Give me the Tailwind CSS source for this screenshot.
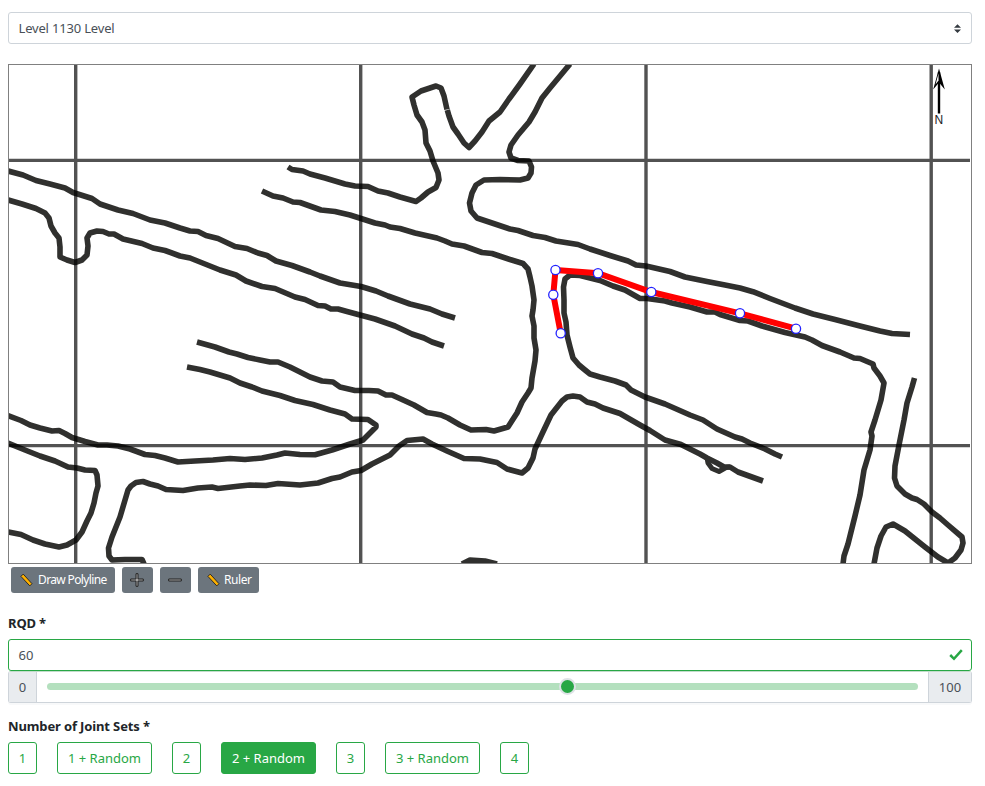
<!DOCTYPE html>
<html lang="en">
<head>
<meta charset="utf-8">
<title>Level map</title>
<script src="https://cdn.jsdelivr.net/npm/@tailwindcss/browser@4"></script>
</head>
<body class="bg-white px-2 pt-3 font-['Noto_Sans',sans-serif] text-[13px] text-[#495057] w-[980px] overflow-hidden">
<div class="flex h-8 items-center justify-between rounded-[3px] border border-[#ced4da] pl-[9.5px] pr-[10px]">
  <span class="pt-[2px] tracking-[-0.18px]">Level 1130 Level</span>
  <svg class="h-[9px] w-[7px]" viewBox="0 0 4 5"><path fill="#343a40" d="M2 0L0 2h4zm0 5L0 3h4z"/></svg>
</div>

<div class="mt-5 h-[500px] border border-[#808080]">
<svg class="block h-[498px] w-[962px]" viewBox="9 65 962 498">
  <!-- mine workings -->
  <g fill="none" stroke="#30302e" stroke-width="5.6" stroke-linejoin="round">
    <polyline points="8,171 23,175 36,180.5 50,184 65,188 73,192.5 92,198.5 100,204 118,210 133,213.5 150,220 165,223 180,228 190,231 198,231.5 206,235.5 218,238.5 235,246.5 247,248.5 258,253 267,255.5 276,261 292,265.5 310,272 320,276 340,283 361,286.5 376,291 388,296 410,304 430,309 442,314 455,318"/>
    <polyline points="8,200 22,204 36,208.5 45,213 49,218 51,226 55,233 59,238 60,247 60,257 67,260 75,262.5 82,260 87,255 88,246 87,238 90,233 97,231 103,231.5 109,234 114,234 123,239 142,243.5 153,248 165,250.5 180,256 190,258 220,270 236,275 246,281 262,286.5 275,288.5 295,297 305,299.5 318,305.5 325,306 331,309 338,309 347,311.5 360,315 375,319 395,326 412,334 424,338 432,342 444,346"/>
    <polyline points="288,167 292,169.5 303,171 310,174 325,178 345,184 355,186 368,186.5 378,191 388,193 400,197 416,201.5 421,198 428,192 436,187.5 439,180 438,173 433,161 430,151 426,143 425,130 422,122 417,115 414,105 412,97 421,91 436,86 441,88 444,96 447,109.500"/>
    <polyline points="447.300,110 449,116 453,127 458,134 464,143 469,147.5 475,141 482,132 489,121 500,112 509,99 520,84 534,64"/>
    <polyline points="262,191 273,196 283,198 293,202 300,202.5 321,210 335,211.5 350,215 361,218.5 375,223 385,225 390,227 400,228.5 415,233 437,238 445,241 452,244 464,246 482,252.5 492,253.5 510,259.5 523,263.5 528,269 530,277 532,286 534,300 533,310 532,316 534,326 534,338 536,350 535,361 532,378 531,388 528,393 522,402 517,413 508,427 494,431 486,429.5 471,430 460,425 448,418 441,415 436,414 427,412.5 414,405 402,399.5 392,395 386,395 378,391 369,390.5 355,390.5 340,387 333,382 322,381 310,377 300,372 290,367 278,362 270,362 260,360 248,357.5 237,354 229,352 215,347 197,342"/>
    <polyline points="187,367 200,369.5 210,372 230,378 240,383 252,387 262,391 280,395.5 295,400.5 313,404.5 330,410 345,414 352,419 368,419.5 376,425 376,427 370,433 363,440 350,444 332,450 315,454.7 300,454.5 285,453 277,455 262,458 245,459.5 230,458.5 213,460 195,461 178,462 165,458 155,455.5 145,454.5 130,449 118,446 107,445 98,445 85,441.5 72,437.5 65,433.5 59,430.5 52,431 40,428 30,425 21,420.5 8,415.5"/>
    <polyline points="8,443 25,450 40,456 55,461 68,467 77,468 85,470 95,470.5 97,475 98,486 96,493 94,503 91,513 87,521 82,532 76,540 67,545 59,547 45,544 33,540 21,534.5 8,532"/>
    <polyline points="144,564 142,559.5 125,559.5 112,560 109,556 108.5,548 112,537 120,517 128,490 131,486 136,482.5 143,481.5 150,484 158,486 166,489.5 183,490.5 198,488 212,487 218,488.5 240,486 250,485 266,485.5 278,483.5 300,485 318,483 332,478.5 340,477 352,472 361,470.5 372,464 390,455 399,446 407,440.5 423,439 432,444 447,451 464,458.5 480,459 497,462.5 507,469 522,473 528,468 533,458 535,449 542,434 551,415 562,401 567,397 573,396 580,397 587,402 595,404 603,408 620,413.5 640,425 650,430.5 665,440 681,444.5 700,454 707,458 717,463 724,467 730,467 738,472 763,481"/>
    <polyline stroke-width="5" points="707,458 708,463 712,468.5 719,471.5 726,467.5 730,467"/>
    <polyline points="843,564 844,556 848,544 851,532 855,516 860,495 864,470 870,450 872,436 871,432 875,420 881,400 884,383 880,376 874,368 873,364 860,358.5 854,358 840,352 822,345.5 812,340 805,337 785,332.5 762,326 748,321 740,320.5 720,314.5 715,312 707,312 690,307 672,303 665,301 647,298.500 640,298.5 625,290 613,286 600,280.5 590,278 580,275.5 570,275 565,279 563.5,287 564,300 564,313 566,322 567,335 570,347 573,358 579,365 585,370 590,374 600,377 615,381 626,385 631,390 645,397 665,404 690,415 703,420 717,429 735,437 742,439 750,443 765,449 775,454 782,457"/>
    <polyline points="570,64 560,76 550,88 542,98 535,112 529,122 518,135 511,145 509,152 511,158 518,160.5 529,161 531.5,167 531,173 528,178 520,180 500,179.5 484,180 476,185 472,193 469.5,203 471,211 477,218 495,224 510,229 518,230.5 533,235.5 545,237.5 556,241 578,244.5 590,249 610,255.5 628,261 636,265 646,266 670,271.5 685,277 707,281.5 725,285 740,288 753,291.7 770,298.5 795,308 813,314 835,319.5 860,326 880,331 892,333.5 910,334.5"/>
    <polyline points="914.5,378 912,387 907,403 904,420 899,445 895,466 894.5,478 897,486 905,494 912,498 917,499.5 924,504 932,512 940,518 948,525 962,537 963,543 961,550 955,558 948,563 938,557 925,547 915,539 905,531 893,524 886,527 881,536 877,548 874,564"/>
    <polyline points="462,564 470,560 485,561 497,564"/>
  </g>
  <!-- survey grid -->
  <g stroke="#000" stroke-opacity=".68" stroke-width="3.4" fill="none">
    <path d="M75.7 65V563M360.7 65V563M646 65V563M931.2 65V563M9 160.4H970M9 445.6H970"/>
  </g>
  <!-- north arrow -->
  <path d="M939 72V113.5" stroke="#000" stroke-width="2.4"/>
  <path d="M939 68.500L944.800 89.500L939 82.500L933.200 89.500Z" fill="#000"/>
  <path d="M938.500 73.500V80.500L935.500 84.500Z" fill="#fff"/>
  <text x="938.9" y="124" text-anchor="middle" font-family="Liberation Sans, sans-serif" font-size="12" fill="#222">N</text>
  <!-- drawn polyline and its handles -->
  <polyline points="560.700,333.300 553.300,294.700 555.500,270 598,273.200 651.300,292 740,313.300 796,328.700" fill="none" stroke="#f00" stroke-width="6"/>
  <g fill="#fff" stroke="#22f" stroke-width="1.3">
    <circle cx="560.700" cy="333.300" r="4.600"/><circle cx="553.300" cy="294.700" r="4.600"/><circle cx="555.500" cy="270" r="4.600"/><circle cx="598" cy="273.200" r="4.600"/><circle cx="651.300" cy="292" r="4.600"/><circle cx="740" cy="313.300" r="4.600"/><circle cx="796" cy="328.700" r="4.600"/>
  </g>
</svg>
</div>

<div class="mt-[3px] ml-[3px] flex h-[26px] gap-[7px] text-[12px] leading-[26px] tracking-[-0.63px] text-white">
  <div class="flex w-[104px] items-center rounded-[3px] bg-[#6c757d] pl-[9px]">
    <svg class="mr-[5px] h-[14px] w-[13px] shrink-0" viewBox="0 0 13 14"><path d="M.9 3.400L3.200 1.100L12 10.700L9.800 12.900Z" fill="#fdb000" stroke="#2b2b2b" stroke-width="1" stroke-linejoin="round"/></svg>
    <span class="whitespace-nowrap">Draw Polyline</span>
  </div>
  <div class="flex w-[31px] items-center justify-center rounded-[3px] bg-[#6c757d]">
    <svg class="mr-px h-[14px] w-[14px]" viewBox="0 0 14 14"><path d="M6 .7H8V6H13.300V8H8V13.300H6V8H.7V6H6Z" fill="#a5a5a5" stroke="#222" stroke-width="1" stroke-linejoin="round"/></svg>
  </div>
  <div class="flex w-[31px] items-center justify-center rounded-[3px] bg-[#6c757d]">
    <svg class="mr-px h-[14px] w-[14px]" viewBox="0 0 14 14"><path d="M.7 6H13.300V8H.7Z" fill="#a5a5a5" stroke="#222" stroke-width="1" stroke-linejoin="round"/></svg>
  </div>
  <div class="flex w-[61px] items-center rounded-[3px] bg-[#6c757d] pl-[9px] tracking-[-0.45px]">
    <svg class="mr-1 h-[14px] w-[13px] shrink-0" viewBox="0 0 13 14"><path d="M.9 3.400L3.200 1.100L12 10.700L9.800 12.900Z" fill="#fdb000" stroke="#2b2b2b" stroke-width="1" stroke-linejoin="round"/></svg>
    <span>Ruler</span>
  </div>
</div>

<div class="mt-5 h-[26px] leading-5 font-bold tracking-[-0.15px] text-[#212529]">RQD *</div>
<div class="flex h-8 items-center justify-between rounded-[3px] border border-[#28a745] pl-[9.5px] pr-[8px]">
  <span class="pt-[2px]">60</span>
  <svg class="h-[12px] w-[14px]" viewBox="0 0 14 12"><path d="M1.200 6L5 9.800L12.800 1.200" fill="none" stroke="#28a745" stroke-width="2.500"/></svg>
</div>
<div class="flex h-8 rounded-[3px] border border-[#ced4da] border-t-[#c3dccb] shadow-[0_2px_0_#f8f9fa]">
  <div class="flex w-[28px] items-center justify-center border-r border-[#ced4da] bg-[#e9ecef] pt-[2px]">0</div>
  <div class="flex grow items-center px-[10px] pb-[2px]">
    <div class="relative h-[7px] grow rounded-full bg-[#b4e0be]">
      <div class="absolute left-[512px] top-[-5px] h-[17px] w-[17px] rounded-full border-2 border-[#dee2e6] bg-[#28a745]"></div>
    </div>
  </div>
  <div class="flex w-[43px] items-center justify-center border-l border-[#ced4da] bg-[#e9ecef] pt-[2px]">100</div>
</div>

<div class="mt-[13px] h-[26px] leading-5 font-bold tracking-[-0.13px] text-[#212529]">Number of Joint Sets *</div>
<div class="flex gap-5 text-[#28a745]">
  <div class="flex h-8 w-[29px] items-center justify-center rounded-[3px] border border-[#28a745] pt-[2px]">1</div>
  <div class="flex h-8 w-[95px] items-center justify-center rounded-[3px] border border-[#28a745] pt-[2px]">1 + Random</div>
  <div class="flex h-8 w-[29px] items-center justify-center rounded-[3px] border border-[#28a745] pt-[2px]">2</div>
  <div class="flex h-8 w-[95px] items-center justify-center rounded-[3px] border border-[#28a745] bg-[#28a745] pt-[2px] text-white">2 + Random</div>
  <div class="flex h-8 w-[29px] items-center justify-center rounded-[3px] border border-[#28a745] pt-[2px]">3</div>
  <div class="flex h-8 w-[95px] items-center justify-center rounded-[3px] border border-[#28a745] pt-[2px]">3 + Random</div>
  <div class="flex h-8 w-[29px] items-center justify-center rounded-[3px] border border-[#28a745] pt-[2px]">4</div>
</div>
</body>
</html>
